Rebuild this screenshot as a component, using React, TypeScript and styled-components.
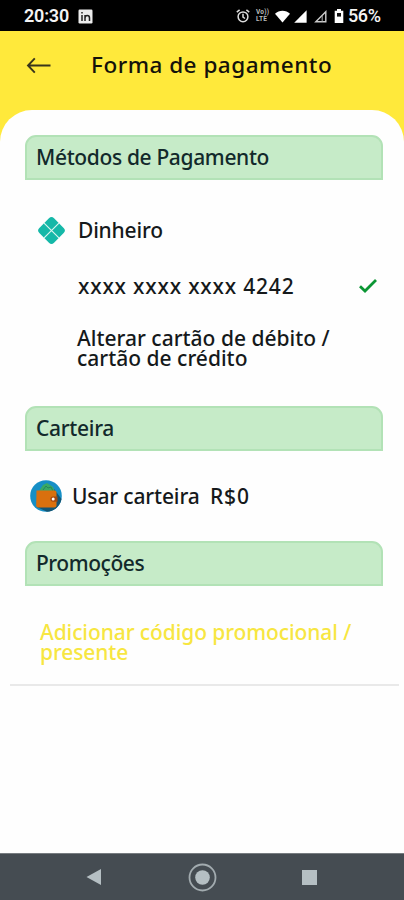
import React from "react";
import styled, { createGlobalStyle } from "styled-components";

const Global = createGlobalStyle`
  * { box-sizing: border-box; }
  body { margin: 0; background: #fff; font-family: "Noto Sans", sans-serif; }
`;

const Screen = styled.div`
  width: 404px;
  height: 900px;
  display: flex;
  flex-direction: column;
  background: #ffe93b;
  overflow: hidden;
`;

const StatusBar = styled.div`
  height: 31px;
  flex: none;
  display: flex;
  align-items: center;
  padding: 1px 23px 0 24px;
  background: #000;
  color: #f4f4f4;
  font-family: Roboto, sans-serif;
`;

const Clock = styled.span`
  width: 45px;
  font-size: 18px;
  font-weight: 600;
  line-height: 20px;
  letter-spacing: -0.2px;
  margin-right: 9px;
`;

const StatusIcons = styled.div`
  margin-left: auto;
  display: flex;
  align-items: center;
`;

const StatusSvg = styled.svg<{ $gap: number }>`
  display: block;
  flex: none;
  margin-right: ${(p) => p.$gap}px;
`;

const Volte = styled.span`
  width: 14px;
  margin-right: 5px;
  font-size: 6.5px;
  font-weight: 700;
  line-height: 7px;
  letter-spacing: 0.2px;
  white-space: nowrap;
  color: #bbb;
`;

const Battery = styled.span`
  width: 33px;
  font-size: 18px;
  font-weight: 500;
  line-height: 20px;
  letter-spacing: -0.4px;
  white-space: nowrap;
`;

const Header = styled.header`
  height: 79px;
  flex: none;
  display: flex;
  align-items: flex-start;
  padding: 18px 0 0 26px;
`;

const BackIcon = styled.svg`
  display: block;
  margin: 8px 39px 0 0;
`;

const Label = styled.span<{ $size?: number; $spacing?: number; $color?: string }>`
  display: block;
  font-size: ${(p) => p.$size ?? 21}px;
  line-height: 20px;
  font-weight: 500;
  letter-spacing: ${(p) => p.$spacing ?? 0}px;
  color: ${(p) => p.$color ?? "#15191b"};
  white-space: nowrap;
`;

const Title = styled(Label).attrs({ as: "h1" })`
  margin: 0;
  line-height: 32px;
`;

const Sheet = styled.main`
  flex: 1;
  padding: 25px 21px 0 25px;
  background: #fefefe;
  border-radius: 32px 32px 0 0;
`;

const SectionTitle = styled.div`
  height: 45px;
  display: flex;
  align-items: center;
  padding: 0 0 1px 9px;
  border: 2px solid #b2e2b6;
  border-radius: 11px 11px 0 0;
  background: #c6ebc8;
`;

const Methods = styled.div`
  height: 226px;
  padding: 35px 5px 0 12px;
`;

const Row = styled.div`
  height: 30px;
  display: flex;
  align-items: center;
`;

const PixIcon = styled.svg`
  margin-right: 12px;
`;

const CheckIcon = styled.svg`
  margin-left: auto;
`;

const CardRow = styled.div`
  height: 82px;
  margin-bottom: 1px;
  display: flex;
  align-items: center;
  padding-left: 41px;
`;

const ChangeCard = styled.div`
  padding-left: 40px;
`;

const Wallet = styled.div`
  height: 90px;
  display: flex;
  align-items: center;
  padding-left: 5px;
`;

const WalletIcon = styled.svg`
  margin-right: 10px;
`;

const WalletName = styled.div`
  width: 138px;
`;

const Promo = styled.div`
  height: 100px;
  margin: 0 -16px 0 -15px;
  padding: 36px 0 0 30px;
  border-bottom: 2px solid #e9e9e9;
`;

const NavBar = styled.nav`
  height: 47px;
  flex: none;
  border-top: 1px solid #777c80;
  background: #454c52;
  display: flex;
  align-items: center;
  padding-left: 86px;
`;

const NavIcon = styled.svg<{ $gap?: number }>`
  display: block;
  margin-right: ${(p) => p.$gap ?? 0}px;
`;

export default function App() {
  return (
    <Screen>
      <Global />
      <StatusBar>
        <Clock>20:30</Clock>
        <StatusSvg $gap={0} width="15" height="15" viewBox="0 0 15 15">
          <rect x="0.5" y="0.5" width="14" height="14" rx="1.2" fill="#ececec" />
          <path d="M4 6v6M4 3v1.6M7 12V6M7 9c0-3.4 4.5-3.4 4.5 0v3" fill="none" stroke="#222" strokeWidth="1.5" />
        </StatusSvg>
        <StatusIcons>
          <StatusSvg $gap={6} width="14" height="14" viewBox="0 0 14 14" fill="none" stroke="#ddd" strokeWidth="1.5">
            <circle cx="7" cy="7.8" r="4.9" />
            <path d="M7 4.8v3.3l2 1.4M.8 3.2 3.6.9M13.2 3.2 10.4.9" />
          </StatusSvg>
          <Volte>Vo))<br />LTE</Volte>
          <StatusSvg $gap={4} width="15" height="13" viewBox="0 0 15 13">
            <path d="M0 3.7C4-.4 11-.4 15 3.7L7.5 12.6z" fill="#fff" />
          </StatusSvg>
          <StatusSvg $gap={7} width="13" height="13" viewBox="0 0 13 13">
            <path d="M12.6.3v12.4H.2z" fill="#fff" />
          </StatusSvg>
          <StatusSvg $gap={7} width="13" height="13" viewBox="0 0 13 13">
            <path d="M11.8 1.8v10H1.8z" fill="none" stroke="#ccc" strokeWidth="1.4" />
            <path d="M8.2 5.7v6" stroke="#aaa" />
          </StatusSvg>
          <StatusSvg $gap={4} width="10" height="14" viewBox="0 0 10 14">
            <path d="M3 0h4v1.8h2.3V14H.7V1.8H3z" fill="#fff" />
            <path d="M3 4h4v3.6H3z" fill="#111" />
          </StatusSvg>
          <Battery>56%</Battery>
        </StatusIcons>
      </StatusBar>
      <Header>
        <BackIcon width="26" height="18" viewBox="0 0 26 18" fill="none" stroke="#39351a" strokeWidth="1.9">
          <path d="M2 8.5h22.5M8.8 1.4 2 8.5l6.8 7.1" />
        </BackIcon>
        <Title $size={22.5} $spacing={0.5} $color="#14120a">Forma de pagamento</Title>
      </Header>
      <Sheet>
        <SectionTitle><Label $spacing={-0.35} $color="#12292b">Métodos de Pagamento</Label></SectionTitle>
        <Methods>
          <Row>
            <PixIcon width="29" height="29" viewBox="0 0 29 29">
              <g transform="rotate(45 14.5 14.5)" fill="#15b8a8">
                <rect x="4.1" y="4.1" width="20.8" height="20.8" rx="3.6" />
                <path d="M14.5 4v21M4 14.5h21" stroke="#d9f4f0" strokeWidth="1.2" />
              </g>
            </PixIcon>
            <Label $spacing={-0.2}>Dinheiro</Label>
          </Row>
          <CardRow>
            <Label $spacing={0.8}>xxxx xxxx xxxx 4242</Label>
            <CheckIcon width="20" height="18" viewBox="0 0 20 18">
              <path d="m2 9.2 5 4.9L18 3" fill="none" stroke="#0b9634" strokeWidth="2.8" />
            </CheckIcon>
          </CardRow>
          <ChangeCard>
            <Label>Alterar cartão de débito /<br />cartão de crédito</Label>
          </ChangeCard>
        </Methods>
        <SectionTitle><Label $spacing={-0.3} $color="#12292b">Carteira</Label></SectionTitle>
        <Wallet>
          <WalletIcon width="32" height="32" viewBox="0 0 32 32">
            <circle cx="16" cy="16" r="15.8" fill="#168fc6" />
            <path d="M24 9 31.5 19A15.8 15.8 0 0 1 17 31.8L7 27z" fill="#135574" />
            <path d="m9 11 4-6 4-2 6 4 2 5z" fill="#39a965" />
            <path d="m13 10 3-4 2 2 3-1 2 4" fill="none" stroke="#24875a" />
            <path d="M6.5 10.5h18q2 0 2 2v13q0 2-2 2H8.2q-2 0-2-2z" fill="#d9700e" />
            <path d="M27.5 16.5h-4.5a2.6 2.6 0 0 0 0 5.2h4.5z" fill="#a5480f" />
            <circle cx="23.2" cy="19.1" r="1.5" fill="#fff" />
          </WalletIcon>
          <WalletName><Label $spacing={-0.15}>Usar carteira</Label></WalletName>
          <Label $spacing={0.8}>R$0</Label>
        </Wallet>
        <SectionTitle><Label $spacing={-0.45} $color="#12292b">Promoções</Label></SectionTitle>
        <Promo>
          <Label $spacing={-0.1} $color="#f7e641">Adicionar código promocional /<br />presente</Label>
        </Promo>
      </Sheet>
      <NavBar>
        <NavIcon $gap={86} width="16" height="16" viewBox="0 0 16 16"><path d="M15 0v16L.5 8z" fill="#b5bfc3" /></NavIcon>
        <NavIcon $gap={85} width="29" height="29" viewBox="0 0 29 29">
          <circle cx="14.5" cy="14.5" r="13" fill="none" stroke="#a2abaf" strokeWidth="1.8" />
          <circle cx="14.5" cy="14.5" r="7.3" fill="#b5bfc3" />
        </NavIcon>
        <NavIcon width="15" height="15" viewBox="0 0 15 15"><path d="M0 0h15v15H0z" fill="#b5bfc3" /></NavIcon>
      </NavBar>
    </Screen>
  );
}
